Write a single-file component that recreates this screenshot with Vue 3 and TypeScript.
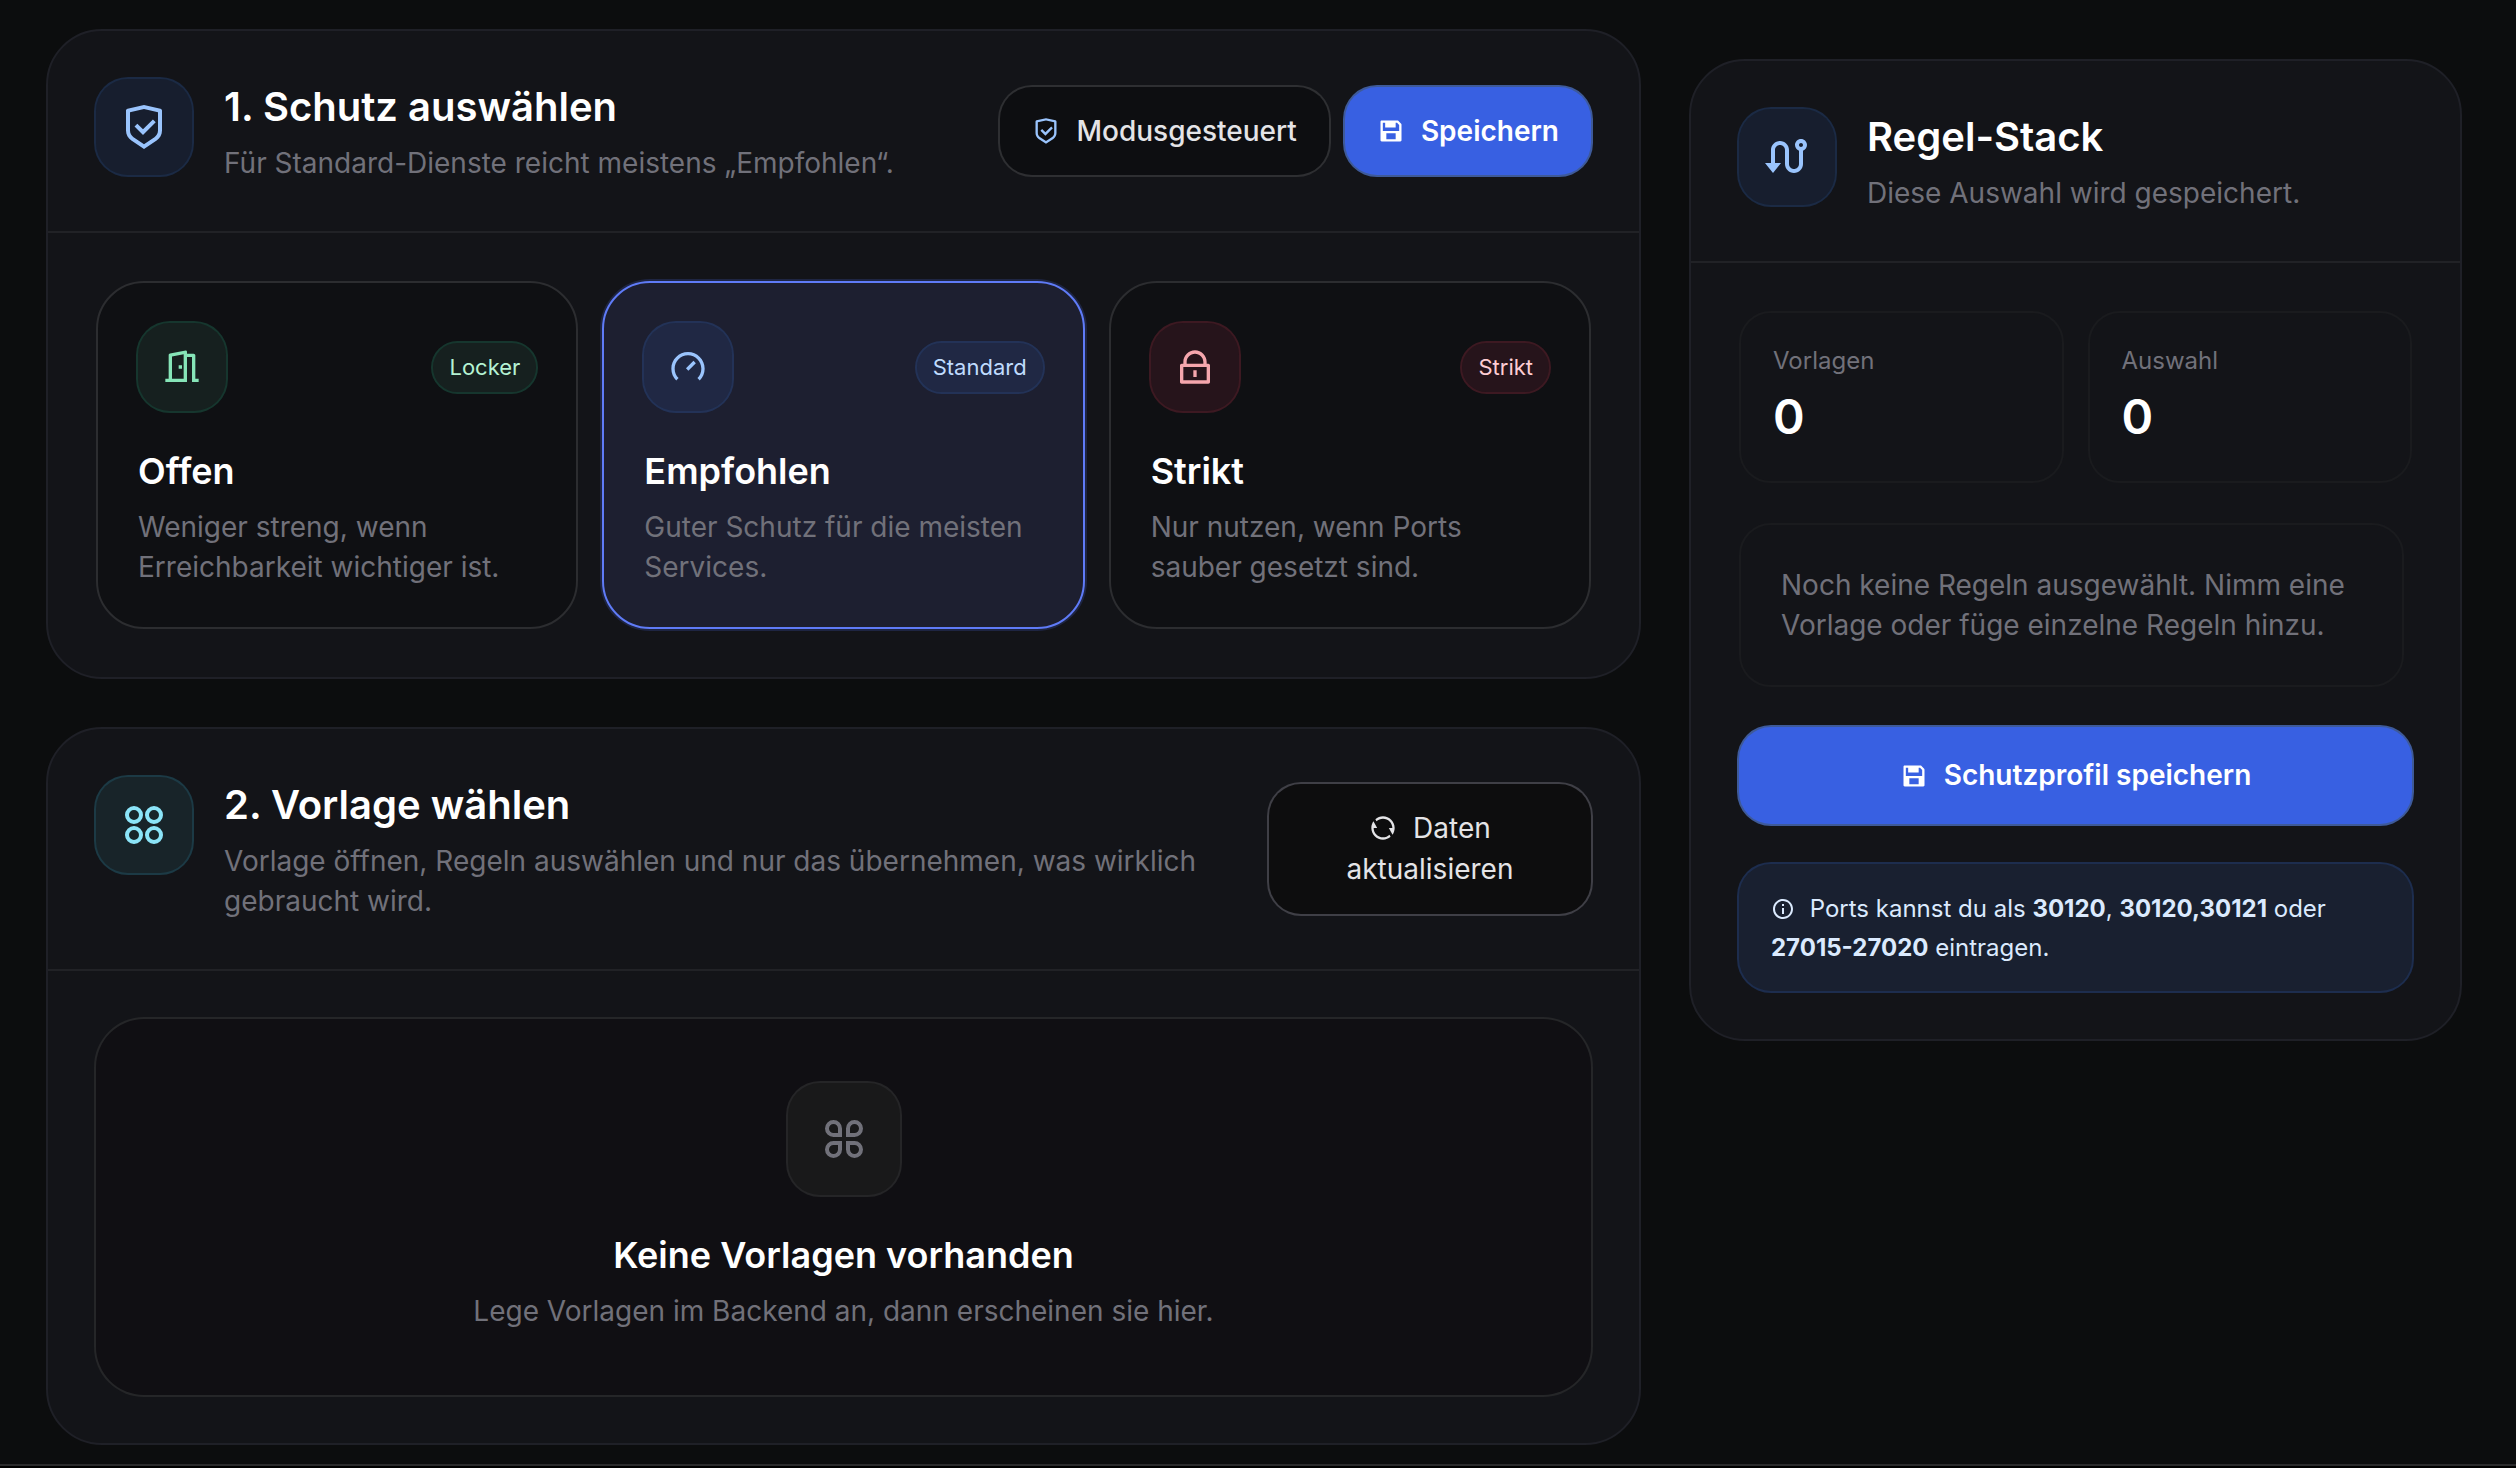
<script setup lang="ts">
import { computed, ref } from 'vue'

interface Mode {
  id: string
  title: string
  text: string
  badge: string
  tone: string
  icon: string
}

const icons: Record<string, string> = {
  shield:
    'M12 1L20.2169 2.82598C20.6745 2.92766 21 3.33347 21 3.80217V13.7889C21 15.795 19.9974 17.6684 18.3282 18.7812L12 23L5.6718 18.7812C4.00261 17.6684 3 15.795 3 13.7889V3.80217C3 3.33347 3.32553 2.92766 3.78307 2.82598L12 1ZM12 3.04879L5 4.60434V13.7889C5 15.1263 5.6684 16.3752 6.7812 17.1171L12 20.5963L17.2188 17.1171C18.3316 16.3752 19 15.1263 19 13.7889V4.60434L12 3.04879ZM16.4524 8.22183L17.8666 9.63604L11.5026 16L7.25999 11.7574L8.67421 10.3431L11.5019 13.1709L16.4524 8.22183Z',
  save: 'M5 5V12H19V6.82843L17.1716 5H16V9H7V5H5ZM4 3H18L20.7071 5.70711C20.8946 5.89464 21 6.149 21 6.41421V20C21 20.5523 20.5523 21 20 21H4C3.44772 21 3 20.5523 3 20V4C3 3.44772 3.44772 3 4 3ZM8 14V19H16V14H8Z',
  door: 'M1.99805 21.0001V19.0001L3.99805 19V4.83465C3.99805 4.35136 4.34367 3.93723 4.81916 3.85078L14.2083 2.14366C14.5701 2.07788 14.9167 2.31784 14.9824 2.67962C14.9895 2.71883 14.9931 2.7586 14.9931 2.79844L14.9931 3.99982L18.9981 4.00007C19.5504 4.00007 19.9981 4.44779 19.9981 5.00007V19.0001H21.9981V21.0001H17.9981V6.00007L14.9931 5.99982V21.0001H1.99805ZM12.9981 4.39671L5.99805 5.67018V19H12.9981V4.39671ZM12 11V13H10V11H12Z',
  speed:
    'M20 13C20 15.2091 19.1046 17.2091 17.6569 18.6569L19.0711 20.0711C20.8807 18.2614 22 15.7614 22 13C22 7.47715 17.5228 3 12 3C6.47715 3 2 7.47715 2 13C2 15.7614 3.11929 18.2614 4.92893 20.0711L6.34315 18.6569C4.89543 17.2091 4 15.2091 4 13C4 8.58172 7.58172 5 12 5C16.4183 5 20 8.58172 20 13ZM15.293 8.29297L10.793 12.793L12.2072 14.2072L16.7072 9.70718L15.293 8.29297Z',
  lock: 'M19 10H20C20.5523 10 21 10.4477 21 11V21C21 21.5523 20.5523 22 20 22H4C3.44772 22 3 21.5523 3 21V11C3 10.4477 3.44772 10 4 10H5V9C5 5.13401 8.13401 2 12 2C15.866 2 19 5.13401 19 9V10ZM5 12V20H19V12H5ZM11 14H13V18H11V14ZM17 10V9C17 6.23858 14.7614 4 12 4C9.23858 4 7 6.23858 7 9V10H17Z',
  circles:
    'M7 2.5a4.5 4.5 0 1 1 0 9a4.5 4.5 0 0 1 0-9ZM7 4.5a2.5 2.5 0 1 0 0 5a2.5 2.5 0 0 0 0-5ZM7 12.5a4.5 4.5 0 1 1 0 9a4.5 4.5 0 0 1 0-9ZM7 14.5a2.5 2.5 0 1 0 0 5a2.5 2.5 0 0 0 0-5ZM17 2.5a4.5 4.5 0 1 1 0 9a4.5 4.5 0 0 1 0-9ZM17 4.5a2.5 2.5 0 1 0 0 5a2.5 2.5 0 0 0 0-5ZM17 12.5a4.5 4.5 0 1 1 0 9a4.5 4.5 0 0 1 0-9ZM17 14.5a2.5 2.5 0 1 0 0 5a2.5 2.5 0 0 0 0-5Z',
  petals:
    'M6.75 2.5A4.25 4.25 0 0 1 11 6.75V11H6.75a4.25 4.25 0 0 1 0-8.5ZM9 9V6.75A2.25 2.25 0 1 0 6.75 9H9ZM6.75 13H11v4.25A4.25 4.25 0 1 1 6.75 13ZM6.75 15A2.25 2.25 0 1 0 9 17.25V15H6.75ZM17.25 2.5a4.25 4.25 0 0 1 0 8.5H13V6.75a4.25 4.25 0 0 1 4.25-4.25ZM17.25 9A2.25 2.25 0 1 0 15 6.75V9h2.25ZM13 13h4.25A4.25 4.25 0 1 1 13 17.25V13ZM15 15v2.25A2.25 2.25 0 1 0 17.25 15H15Z',
  route:
    'M4 15V8.5C4 6.01472 6.01472 4 8.5 4C10.9853 4 13 6.01472 13 8.5V15.5C13 16.8807 14.1193 18 15.5 18C16.8807 18 18 16.8807 18 15.5V8.82929C16.8348 8.41746 16 7.30622 16 6C16 4.34315 17.3431 3 19 3C20.6569 3 22 4.34315 22 6C22 7.30622 21.1652 8.41746 20 8.82929V15.5C20 17.9853 17.9853 20 15.5 20C13.0147 20 11 17.9853 11 15.5V8.5C11 7.11929 9.88071 6 8.5 6C7.11929 6 6 7.11929 6 8.5V15H9L5 20L1 15H4ZM19 7C19.5523 7 20 6.55228 20 6C20 5.44772 19.5523 5 19 5C18.4477 5 18 5.44772 18 6C18 6.55228 18.4477 7 19 7Z',
  refresh:
    'M5.46257 4.43262C7.21556 2.91688 9.5007 2 12 2C17.5228 2 22 6.47715 22 12C22 14.1361 21.3302 16.1158 20.1892 17.7406L17 12H20C20 7.58172 16.4183 4 12 4C9.84982 4 7.89777 4.84827 6.46023 6.22842L5.46257 4.43262ZM18.5374 19.5674C16.7844 21.0831 14.4993 22 12 22C6.47715 22 2 17.5228 2 12C2 9.86386 2.66979 7.88416 3.8108 6.25944L7 12H4C4 16.4183 7.58172 20 12 20C14.1502 20 16.1022 19.1517 17.5398 17.7716L18.5374 19.5674Z',
  info: 'M12 22C6.47715 22 2 17.5228 2 12C2 6.47715 6.47715 2 12 2C17.5228 2 22 6.47715 22 12C22 17.5228 17.5228 22 12 22ZM12 20C16.4183 20 20 16.4183 20 12C20 7.58172 16.4183 4 12 4C7.58172 4 4 7.58172 4 12C4 16.4183 7.58172 20 12 20ZM11 7H13V9H11V7ZM11 11H13V17H11V11Z',
}

const modes: Mode[] = [
  { id: 'open', title: 'Offen', text: 'Weniger streng, wenn Erreichbarkeit wichtiger ist.', badge: 'Locker', tone: 'green', icon: 'door' },
  { id: 'recommended', title: 'Empfohlen', text: 'Guter Schutz für die meisten Services.', badge: 'Standard', tone: 'blue', icon: 'speed' },
  { id: 'strict', title: 'Strikt', text: 'Nur nutzen, wenn Ports sauber gesetzt sind.', badge: 'Strikt', tone: 'red', icon: 'lock' },
]

const selected = ref('recommended')
const templates = ref<string[]>([])
const rules = ref<string[]>([])
const stats = computed(() => [
  { label: 'Vorlagen', value: templates.value.length },
  { label: 'Auswahl', value: rules.value.length },
])
</script>

<template>
  <main class="page">
    <div class="main-column">
      <section class="card">
        <header class="card-head">
          <span class="tile blue"><svg class="icon-lg" viewBox="0 0 24 24"><path :d="icons.shield" /></svg></span>
          <div class="head-text">
            <h2>1. Schutz auswählen</h2>
            <p>Für Standard-Dienste reicht meistens „Empfohlen“.</p>
          </div>
          <div class="actions">
            <button type="button" class="btn btn-dark">
              <svg class="icon-sm accent" viewBox="0 0 24 24"><path :d="icons.shield" /></svg>
              <span>Modusgesteuert</span>
            </button>
            <button type="button" class="btn btn-primary">
              <svg class="icon-sm" viewBox="0 0 24 24"><path :d="icons.save" /></svg>
              <span>Speichern</span>
            </button>
          </div>
        </header>
        <div class="card-body modes">
          <button
            v-for="mode in modes"
            :key="mode.id"
            type="button"
            class="mode"
            :class="{ selected: selected === mode.id }"
            :aria-pressed="selected === mode.id"
            @click="selected = mode.id"
          >
            <span class="mode-top">
              <span class="tile small" :class="mode.tone">
                <svg class="icon-md" viewBox="0 0 24 24"><path :d="icons[mode.icon]" /></svg>
              </span>
              <span class="badge" :class="mode.tone">{{ mode.badge }}</span>
            </span>
            <span class="mode-title">{{ mode.title }}</span>
            <span class="mode-text">{{ mode.text }}</span>
          </button>
        </div>
      </section>

      <section class="card">
        <header class="card-head">
          <span class="tile cyan"><svg class="icon-lg" viewBox="0 0 24 24"><path :d="icons.circles" /></svg></span>
          <div class="head-text">
            <h2>2. Vorlage wählen</h2>
            <p>Vorlage öffnen, Regeln auswählen und nur das übernehmen, was wirklich gebraucht wird.</p>
          </div>
          <button type="button" class="btn-refresh">
            <svg class="icon-sm inline" viewBox="0 0 24 24"><path :d="icons.refresh" /></svg>
            Daten aktualisieren
          </button>
        </header>
        <div class="card-body">
          <div class="empty">
            <span class="tile large neutral"><svg class="icon-lg" viewBox="0 0 24 24"><path :d="icons.petals" /></svg></span>
            <h3>Keine Vorlagen vorhanden</h3>
            <p>Lege Vorlagen im Backend an, dann erscheinen sie hier.</p>
          </div>
        </div>
      </section>
    </div>

    <aside class="card side">
      <header class="card-head">
        <span class="tile blue"><svg class="icon-lg" viewBox="0 0 24 24"><path :d="icons.route" /></svg></span>
        <div class="head-text">
          <h2>Regel-Stack</h2>
          <p>Diese Auswahl wird gespeichert.</p>
        </div>
      </header>
      <div class="card-body stack">
        <dl class="stats">
          <div v-for="stat in stats" :key="stat.label" class="stat">
            <dt>{{ stat.label }}</dt>
            <dd>{{ stat.value }}</dd>
          </div>
        </dl>
        <div class="rules">
          <p class="rules-empty">Noch keine Regeln ausgewählt. Nimm eine Vorlage oder füge einzelne Regeln hinzu.</p>
        </div>
        <button type="button" class="btn btn-primary btn-wide">
          <svg class="icon-sm" viewBox="0 0 24 24"><path :d="icons.save" /></svg>
          <span>Schutzprofil speichern</span>
        </button>
        <p class="hint">
          <svg class="icon-xs inline" viewBox="0 0 24 24"><path :d="icons.info" /></svg>
          Ports kannst du als <strong>30120</strong>, <strong>30120,30121</strong> oder
          <strong>27015-27020</strong> eintragen.
        </p>
      </div>
    </aside>
  </main>
</template>

<style>
body {
  margin: 0;
  background: #000;
}
</style>

<style scoped>
.page,
.page * {
  box-sizing: border-box;
}
.page {
  display: grid;
  grid-template-columns: minmax(0, 1fr) 773px;
  gap: 48px;
  align-items: start;
  padding: 29px 54px 19px 46px;
  border-bottom: 2px solid #2b2b2c;
  background: #0c0d0e;
  color: #71717a;
  font-family: Inter, "Liberation Sans", sans-serif;
  font-size: 28px;
  line-height: 40px;
}
h2,
h3,
p,
dl,
dd {
  margin: 0;
}
button {
  font: inherit;
  cursor: pointer;
}
svg {
  display: block;
  flex: none;
  fill: currentColor;
}
.main-column {
  display: grid;
  gap: 48px;
}
.card {
  border: 2px solid #1f2027;
  border-radius: 56px;
  background: #131418;
}
.side {
  margin-top: 30px;
}
.card-head {
  display: flex;
  align-items: flex-start;
  gap: 32px;
  padding: 48px;
  border-bottom: 2px solid #212226;
}
.card-body {
  padding: 48px;
}
.head-text {
  flex: 1;
  min-width: 0;
}
h2,
h3,
.mode-title {
  color: #fff;
  font-weight: 600;
  line-height: 56px;
}
h2 {
  font-size: 40px;
}
h3,
.mode-title {
  font-size: 36px;
}
h2 + p,
h3 + p {
  margin-top: 8px;
}
.tile {
  display: flex;
  flex: none;
  align-items: center;
  justify-content: center;
  width: 96px;
  height: 96px;
  border-radius: 32px;
}
.tile.small {
  width: 88px;
  height: 88px;
}
.tile.large {
  width: 112px;
  height: 112px;
}
.icon-lg {
  width: 48px;
  height: 48px;
}
.icon-md {
  width: 40px;
  height: 40px;
}
.icon-sm {
  width: 28px;
  height: 28px;
}
.icon-xs {
  width: 24px;
  height: 24px;
}
.inline {
  display: inline-block;
  margin-right: 8px;
  vertical-align: -4px;
}
.blue {
  background: rgba(59, 130, 246, 0.1);
  box-shadow: 0 0 0 2px rgba(59, 130, 246, 0.2);
  color: #9ac4fd;
}
.green {
  background: rgba(110, 231, 183, 0.08);
  box-shadow: 0 0 0 2px rgba(52, 211, 153, 0.2);
  color: #86e5b8;
}
.red {
  background: rgba(244, 63, 94, 0.1);
  box-shadow: 0 0 0 2px rgba(244, 63, 94, 0.2);
  color: #f5a6ad;
}
.cyan {
  background: #182429;
  box-shadow: 0 0 0 2px #1c3a45;
  color: #8be4f8;
}
.neutral {
  background: #19191a;
  box-shadow: 0 0 0 2px #252527;
  color: #71717a;
}
.actions {
  display: flex;
  align-self: center;
  gap: 16px;
}
.btn {
  display: flex;
  align-items: center;
  justify-content: center;
  gap: 16px;
  padding: 24px 32px;
  border: 0;
  border-radius: 32px;
}
.btn-dark {
  background: #0d0e11;
  box-shadow: 0 0 0 2px #2e2f32;
  color: #e4e4e7;
  font-weight: 500;
}
.accent {
  color: #9ac4fd;
}
.btn-primary {
  background: #3860e2;
  box-shadow: 0 0 0 2px #3e5a99;
  color: #fff;
  font-weight: 600;
}
.btn-wide {
  width: 100%;
  padding: 28px 32px;
  line-height: 41px;
}
.btn-refresh {
  flex: 0 0 322px;
  align-self: center;
  padding: 24px 64px;
  border: 0;
  border-radius: 32px;
  background: #0d0d0e;
  box-shadow: 0 0 0 2px #3f3f46;
  color: #e4e4e7;
  line-height: 41px;
}
.modes {
  display: grid;
  grid-template-columns: repeat(3, minmax(0, 1fr));
  gap: 24px;
}
.mode {
  display: flex;
  flex-direction: column;
  padding: 40px;
  border: 2px solid #2c2d30;
  border-radius: 48px;
  background: #0f1013;
  color: inherit;
  text-align: left;
}
.mode.selected {
  border-color: #5f7bf7;
  background: #1d1f30;
  box-shadow: 0 0 0 2px #1e2542;
}
.mode-top {
  display: flex;
  align-items: center;
  justify-content: space-between;
  margin-bottom: 32px;
}
.mode-text {
  margin-top: 8px;
}
.badge {
  padding: 8px 16px;
  border-radius: 32px;
  font-size: 22px;
  line-height: 33px;
}
.badge.blue {
  color: #bfdbfe;
}
.badge.green {
  color: #b5f2d3;
}
.badge.red {
  color: #fecdd3;
}
.empty {
  display: flex;
  flex-direction: column;
  align-items: center;
  padding: 64px;
  border-radius: 48px;
  background: #100f13;
  box-shadow: 0 0 0 2px #252628;
  text-align: center;
}
.empty h3 {
  margin-top: 32px;
}
.stack {
  display: grid;
  gap: 40px;
}
.stats {
  display: grid;
  grid-template-columns: 1fr 1fr;
  gap: 24px;
}
.stat {
  padding: 32px;
  border: 2px solid #1a1b1e;
  border-radius: 32px;
}
dt {
  font-size: 24px;
  line-height: 32px;
}
dd {
  margin-top: 8px;
  color: #fff;
  font-size: 48px;
  font-weight: 600;
  line-height: 64px;
}
.rules {
  padding-right: 8px;
}
.rules-empty {
  padding: 40px;
  border: 2px solid #1a1b1e;
  border-radius: 32px;
}
.hint {
  padding: 25px 32px 24px;
  border-radius: 32px;
  background: #192030;
  box-shadow: 0 0 0 2px #1d2d4e;
  color: #dbeafe;
  font-size: 24px;
  line-height: 39px;
}
.hint strong {
  font-weight: 700;
}
</style>
